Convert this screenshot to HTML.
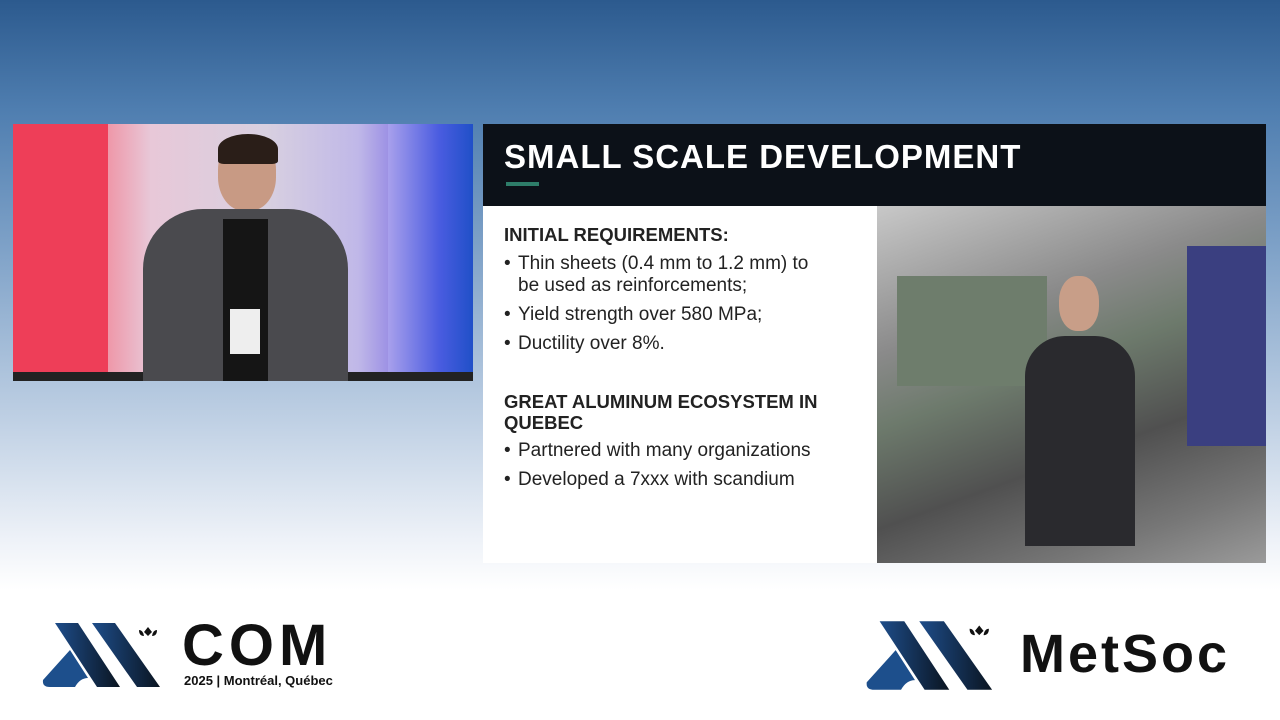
<!DOCTYPE html>
<html><head><meta charset="utf-8"><style>
body{margin:0;width:1280px;height:720px;overflow:hidden;position:relative;font-family:"Liberation Sans",sans-serif;
background:linear-gradient(180deg,#2c5a8e 0px,#4f7eb0 110px,#7fa2c8 250px,#bfd0e4 420px,#eef2f8 540px,#fff 590px,#fff 720px);}
.abs{position:absolute}
#vid{left:13px;top:124px;width:460px;height:257px;background:linear-gradient(90deg,#f04a62 0%,#f27a8c 15%,#e8c8d8 30%,#d8d0e0 55%,#c0b8e8 75%,#7060e0 90%,#3858d8 100%);overflow:hidden}
#slide{left:483px;top:124px;width:783px;height:439px;background:#fff}
#hdr{left:0;top:0;width:783px;height:82px;background:#0c1118}
h1{position:absolute;left:21px;top:14px;margin:0;color:#fff;font-size:33px;font-weight:bold;letter-spacing:1px}
.bar{left:23px;top:58px;width:33px;height:4px;background:#2e7d69}
.txt{color:#222;font-size:19px;line-height:22px}
.b{font-weight:bold;font-size:18.5px}
.li{position:relative;padding-left:14px;margin-top:7px}
.li:before{content:"•";position:absolute;left:0;top:0}
#photo{left:394px;top:82px;width:389px;height:357px;background:linear-gradient(160deg,#c8c8c8 0%,#8a8a8a 30%,#6d7a6c 45%,#505050 65%,#777 85%,#9a9a9a 100%)}
</style></head><body>
<div id="vid" class="abs">
 <div class="abs" style="left:0;top:0;width:95px;height:257px;background:#ee3e58"></div>
 <div class="abs" style="left:375px;top:0;width:85px;height:257px;background:linear-gradient(90deg,#a8a0ec,#4a5ce0 60%,#2050c8)"></div>
 <div class="abs" style="left:0;top:248px;width:460px;height:9px;background:#222"></div>
 <div class="abs" style="left:205px;top:12px;width:58px;height:75px;border-radius:45%;background:#c89a84"></div>
 <div class="abs" style="left:205px;top:10px;width:60px;height:30px;border-radius:50% 50% 10% 10%;background:#2a1e18"></div>
 <div class="abs" style="left:130px;top:85px;width:205px;height:172px;border-radius:60px 60px 0 0;background:#4a4a4e"></div>
 <div class="abs" style="left:210px;top:95px;width:45px;height:162px;background:#151515"></div>
 <div class="abs" style="left:217px;top:185px;width:30px;height:45px;background:#eee"></div>
</div>
<div id="slide" class="abs">
 <div id="hdr" class="abs"><h1>SMALL SCALE DEVELOPMENT</h1><div class="abs bar"></div></div>
 <div class="abs txt" style="left:21px;top:100px;width:360px">
  <div class="b">INITIAL REQUIREMENTS:</div>
  <div class="li">Thin sheets (0.4 mm to 1.2 mm) to<br>be used as reinforcements;</div>
  <div class="li">Yield strength over 580 MPa;</div>
  <div class="li">Ductility over 8%.</div>
  <div class="b" style="margin-top:36px;line-height:21px">GREAT ALUMINUM ECOSYSTEM IN<br>QUEBEC</div>
  <div class="li">Partnered with many organizations</div>
  <div class="li">Developed a 7xxx with scandium</div>
 </div>
 <div id="photo" class="abs">
  <div class="abs" style="left:20px;top:70px;width:150px;height:110px;background:#6e7d6c"></div>
  <div class="abs" style="left:310px;top:40px;width:79px;height:200px;background:#3a3f80"></div>
  <div class="abs" style="left:148px;top:130px;width:110px;height:210px;border-radius:40px 40px 0 0;background:#2a2a2e"></div>
  <div class="abs" style="left:182px;top:70px;width:40px;height:55px;border-radius:45%;background:#c89e88"></div>
 </div>
</div>
<svg class="abs" style="left:40px;top:620px" width="125" height="70" viewBox="0 0 125 70">
 <defs><linearGradient id="g" x1="0" x2="1"><stop offset="0" stop-color="#1e4d8a"/><stop offset="1" stop-color="#0a1420"/></linearGradient></defs>
 <polygon points="15,3 38,3 80,67 57,67" fill="url(#g)"/>
 <polygon points="52,3 75,3 120,67 97,67" fill="url(#g)"/>
 <path d="M3,60 L30,30 L48,58 Q40,58 35,67 L10,67 Q2,67 3,60Z" fill="#1d4f8c"/>
 <path d="M104,12 l4,-5 l4,5 l-4,4z M99,10 q4,0 5,6 q-5,0 -5,-6z M117,10 q-4,0 -5,6 q5,0 5,-6z" fill="#111"/>
</svg>
<div class="abs" style="left:182px;top:612px;font-size:58px;font-weight:bold;color:#111;letter-spacing:5px">COM</div>
<div class="abs" style="left:184px;top:673px;font-size:13px;font-weight:bold;color:#111">2025 | Montréal, Québec</div>
<svg class="abs" style="left:863px;top:618px" width="135" height="75" viewBox="0 0 125 70">
 <polygon points="15,3 38,3 80,67 57,67" fill="url(#g)"/>
 <polygon points="52,3 75,3 120,67 97,67" fill="url(#g)"/>
 <path d="M3,60 L30,30 L48,58 Q40,58 35,67 L10,67 Q2,67 3,60Z" fill="#1d4f8c"/>
 <path d="M104,12 l4,-5 l4,5 l-4,4z M99,10 q4,0 5,6 q-5,0 -5,-6z M117,10 q-4,0 -5,6 q5,0 5,-6z" fill="#111"/>
</svg>
<div class="abs" style="left:1020px;top:623px;font-size:54px;font-weight:bold;color:#111;letter-spacing:3px">MetSoc</div>
</body></html>
